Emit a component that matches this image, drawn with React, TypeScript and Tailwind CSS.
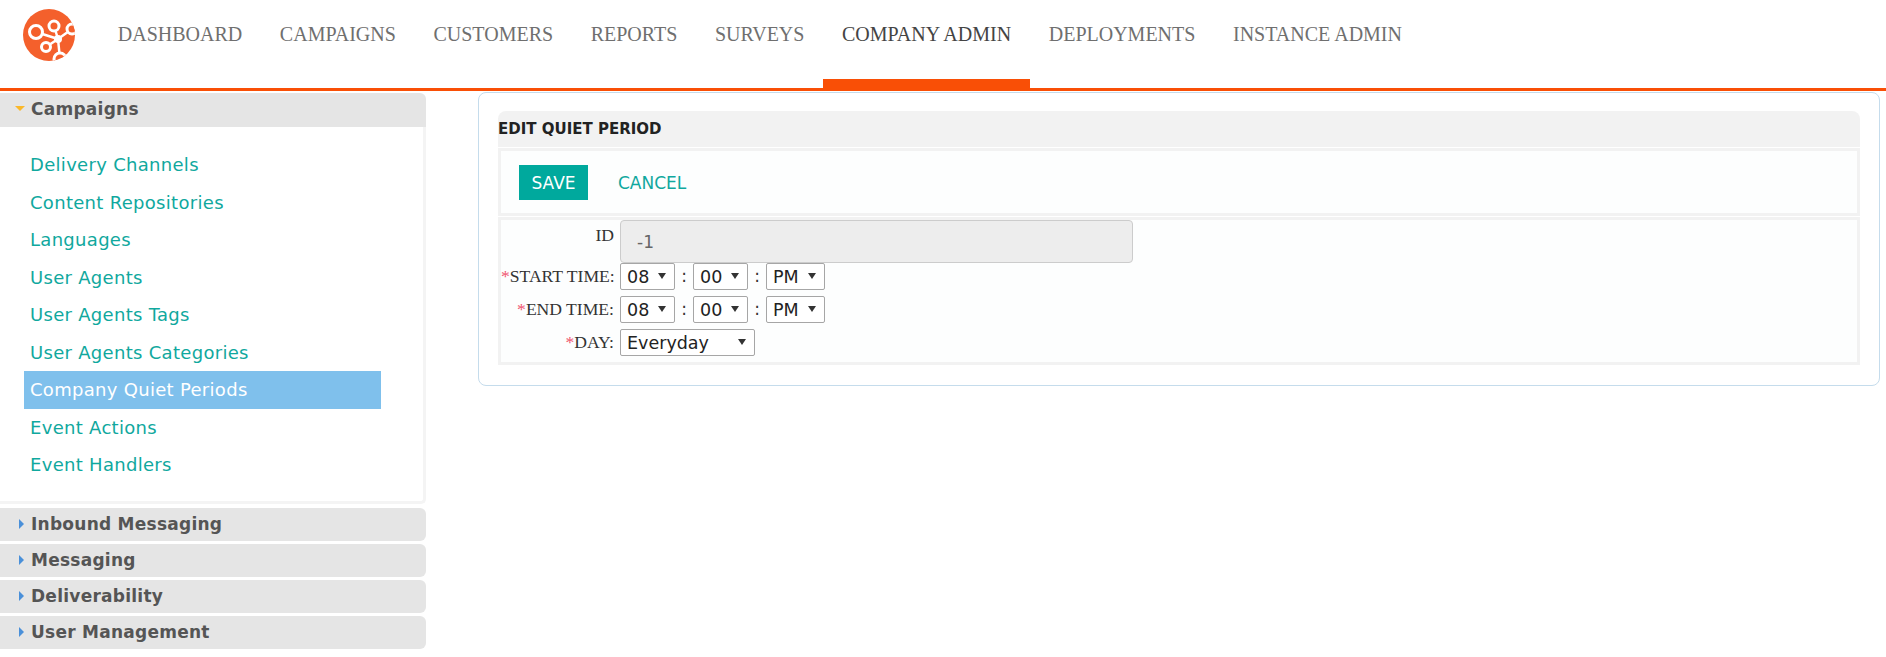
import React from 'react'

const navItems = ['DASHBOARD', 'CAMPAIGNS', 'CUSTOMERS', 'REPORTS', 'SURVEYS', 'COMPANY ADMIN', 'DEPLOYMENTS', 'INSTANCE ADMIN']
const campaignLinks = ['Delivery Channels', 'Content Repositories', 'Languages', 'User Agents', 'User Agents Tags', 'User Agents Categories', 'Company Quiet Periods', 'Event Actions', 'Event Handlers']
const otherSections = ['Inbound Messaging', 'Messaging', 'Deliverability', 'User Management']

const Logo = () => (
  <svg width="52" height="52" viewBox="0 0 52 52" className="shrink-0">
    <defs>
      <clipPath id="logoClip">
        <circle cx="26" cy="26" r="26" />
      </clipPath>
    </defs>
    <circle cx="26" cy="26" r="26" fill="#f4602c" />
    <g clipPath="url(#logoClip)" stroke="#fff" fill="none" strokeWidth="3">
      <path d="M13 23L35 30M31 17L35 30M49 20L35 30M23 38L35 30M35 30L37 50" strokeWidth="2.5" />
      <circle cx="13" cy="23" r="6.5" fill="#f4602c" />
      <circle cx="31" cy="17" r="5" fill="#f4602c" />
      <circle cx="49" cy="20" r="5" fill="#f4602c" />
      <circle cx="23" cy="38" r="4.5" fill="#f4602c" />
      <circle cx="37" cy="50" r="6" fill="#f4602c" />
      <circle cx="35" cy="30" r="4" fill="#fff" stroke="none" />
    </g>
  </svg>
)

const FormSelect = ({ value, options, width }: { value: string; options: string[]; width: string }) => (
  <div className={`${width} relative h-[27px]`}>
    <select defaultValue={value} className="w-full h-full appearance-none border border-[#a6a6a6] bg-white pl-[6px] rounded-[2px] text-[17.5px] text-[#222] font-['DejaVu_Sans',sans-serif]">
      {options.map((o) => (
        <option key={o}>{o}</option>
      ))}
    </select>
    <span className="absolute right-[9px] top-[10px] w-0 h-0 border-x-[4px] border-x-transparent border-t-[6px] border-t-[#333] pointer-events-none" />
  </div>
)

const TimeRow = ({ label }: { label: string }) => (
  <div className="flex items-center h-[27px] mb-[6px]">
    <label className="w-[113px] text-right text-[17.6px] text-[#333] font-['Liberation_Serif',serif] whitespace-nowrap">
      <span className="text-[#f0556f]">*</span>{label}
    </label>
    <div className="flex items-center ml-[6px]">
      <FormSelect value="08" options={['08', '09', '10']} width="w-[55px]" />
      <span className="w-[18px] text-center text-[17px] text-[#333]">:</span>
      <FormSelect value="00" options={['00', '15', '30']} width="w-[55px]" />
      <span className="w-[18px] text-center text-[17px] text-[#333]">:</span>
      <FormSelect value="PM" options={['AM', 'PM']} width="w-[59px]" />
    </div>
  </div>
)

const SectionHeader = ({ title }: { title: string }) => (
  <div className="h-[33px] mb-[3px] bg-[#e5e5e5] rounded-r-[6px] flex items-center pl-[31px] relative">
    <span className="absolute left-[19px] top-[11px] w-0 h-0 border-y-[5px] border-y-transparent border-l-[5px] border-l-[#4a90d9]" />
    <span className="text-[17px] font-bold text-[#555] tracking-[0.25px]">{title}</span>
  </div>
)

export default function App() {
  return (
    <div className="w-[1886px] h-[657px] overflow-hidden bg-white font-['DejaVu_Sans',sans-serif]">
      <header className="h-[91px] border-b-[3px] border-[#f94f06] flex pl-[23px]">
        <div className="pt-[9px] w-[76px]">
          <Logo />
        </div>
        <nav className="flex font-['Liberation_Serif',serif] text-[20px] text-[#6f6f6f]">
          {navItems.map((item) => (
            <a key={item} className={`h-[88px] px-[18.8px] pt-[19px] whitespace-nowrap ${item === 'COMPANY ADMIN' ? 'border-b-[9px] border-[#f94f06] text-[#444]' : ''}`}>
              {item}
            </a>
          ))}
        </nav>
      </header>

      <div className="flex">
        <aside className="w-[426px] pt-[2px] shrink-0">
          <div className="h-[34px] bg-[#e5e5e5] rounded-tr-[6px] flex items-center pl-[31px] relative">
            <span className="absolute left-[15px] top-[13px] w-0 h-0 border-x-[5px] border-x-transparent border-t-[5px] border-t-[#fbb829]" />
            <span className="text-[17px] font-bold text-[#555] tracking-[0.25px]">Campaigns</span>
          </div>
          <div className="h-[377px] mb-[4px] border-r-[3px] border-b-[3px] border-[#f4f4f4] rounded-br-[5px] pt-[19px] flex flex-col">
            {campaignLinks.map((link) => (
              <a
                key={link}
                className={`ml-[24px] w-[357px] h-[37.5px] pl-[6px] flex items-center text-[18px] tracking-[0.3px] ${link === 'Company Quiet Periods' ? 'bg-[#7fc0ec] text-white' : 'text-[#10a89e]'}`}
              >
                {link}
              </a>
            ))}
          </div>
          {otherSections.map((s) => (
            <SectionHeader key={s} title={s} />
          ))}
        </aside>

        <main className="ml-[52px] mt-[1px] w-[1402px] h-[294px] border border-[#c5dcec] rounded-[8px] px-[19px] pt-[18px]">
          <div className="h-[36px] bg-[#f2f2f2] rounded-t-[8px] flex items-center text-[15px] font-bold text-[#222]">
            EDIT QUIET PERIOD
          </div>
          <div className="mt-[1px] h-[68px] border-[3px] border-[#f2f2f2] bg-[#fdfefe] flex items-center pl-[18px]">
            <button className="h-[35px] w-[69px] pt-[3px] bg-[#00a99d] text-white text-[17px]">SAVE</button>
            <a className="ml-[30px] pt-[3px] text-[17px] text-[#10a89e]">CANCEL</a>
          </div>
          <div className="mt-[1px] h-[148px] border-[3px] border-[#f2f2f2] bg-[#fdfefe] flex flex-col">
            <div className="flex">
              <label className="w-[113px] pt-[2px] text-right text-[17.6px] text-[#333] font-['Liberation_Serif',serif]">ID</label>
              <input
                readOnly
                value="-1"
                className="ml-[6px] w-[513px] h-[43px] bg-[#ededed] border border-[#ccc] rounded-[4px] pl-[16px] text-[17px] text-[#666] font-['DejaVu_Sans',sans-serif]"
              />
            </div>
            <TimeRow label="START TIME:" />
            <TimeRow label="END TIME:" />
            <div className="flex items-center h-[27px]">
              <label className="w-[113px] text-right text-[17.6px] text-[#333] font-['Liberation_Serif',serif]">
                <span className="text-[#f0556f]">*</span>DAY:
              </label>
              <div className="ml-[6px]">
                <FormSelect value="Everyday" options={['Everyday', 'Weekdays', 'Weekends']} width="w-[135px]" />
              </div>
            </div>
          </div>
        </main>
      </div>
    </div>
  )
}
